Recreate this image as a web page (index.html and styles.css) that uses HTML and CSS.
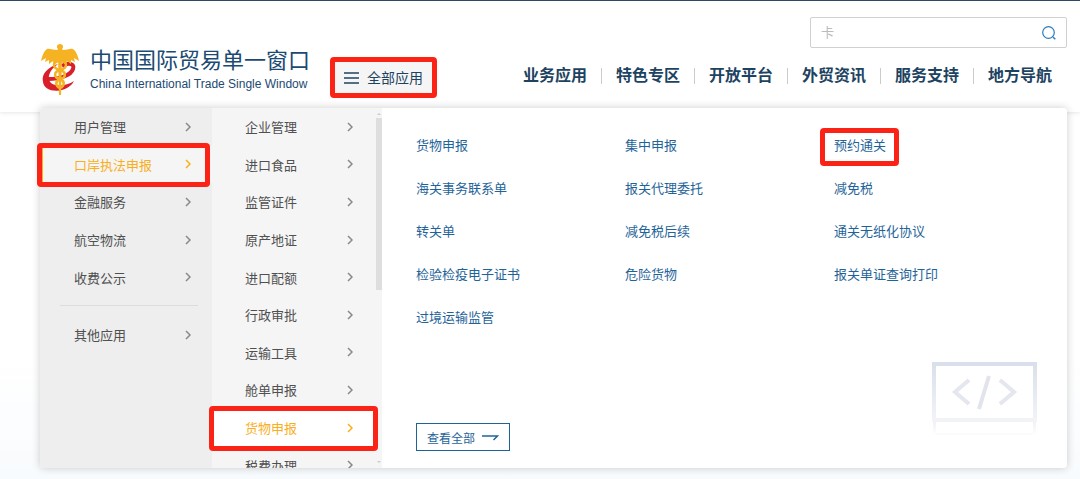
FILE: index.html
```html
<!DOCTYPE html>
<html lang="zh-CN">
<head>
  <meta charset="UTF-8">
  <title>中国国际贸易单一窗口</title>
  <link rel="stylesheet" href="styles.css">
</head>
<body>
  <svg class="defs" width="0" height="0">
    <symbol id="chevron" viewBox="0 0 6 10">
      <path d="M1 1l4 4-4 4" fill="none" stroke="currentColor" stroke-width="1.5"/>
    </symbol>
  </svg>

  <header class="header">
    <a class="brand" href="#">
      <svg class="emblem" viewBox="0 0 40 54">
        <path d="M22 23C29 19 35 21 33 26C31 32 21 36 8 36" fill="none" stroke="#d9202a" stroke-width="4"/>
        <path d="M18 21C8 24 1 31 3 39C4 47 15 50 25 46C29 44 32 42 34 38C27 43 15 44 11 40C7 36 8 28 18 21Z" fill="#d9202a"/>
        <path d="M20 1c3 0 4 3 2 5l1 1c4 0 7-2 10-1 3 2 5 7 6 12l-5-3 1 4-4-2v4l-4-3-1 4-4-3h-4l-4 3-1-4-4 3v-4l-4 2 1-4-5 3c1-5 3-10 6-12 3-1 6 1 10 1l1-1c-2-2-1-5 2-5z" fill="#f5b324"/>
        <path d="M18 14h4l-1 38h-2z" fill="#f5b324"/>
        <path d="M20 18C12 17 12 25 20 27C27 29 26 35 20 36C15 38 15 43 20 45M20 18C28 18 28 25 20 27C13 29 14 35 20 36C25 38 25 43 20 45" fill="none" stroke="#f5b324" stroke-width="2.500"/>
      </svg>
      <span class="brand-text">
        <span class="brand-cn">中国国际贸易单一窗口</span>
        <span class="brand-en">China International Trade Single Window</span>
      </span>
    </a>

    <button class="all-apps" type="button">
      <svg width="15" height="12" viewBox="0 0 15 12">
        <path d="M0 1h15M0 6h15M0 11h15" stroke="#1d4361" stroke-width="1.5"/>
      </svg>
      全部应用
    </button>

    <div class="header-right">
      <form class="search">
        <input type="text" placeholder="卡" aria-label="搜索">
        <button type="submit" aria-label="搜索">
          <svg width="14" height="14" viewBox="0 0 14 14">
            <circle cx="6.5" cy="6.5" r="5.8" fill="none" stroke="#2f7dbb" stroke-width="1.2"/>
            <path d="M11 11l2.300 2.300" stroke="#2f7dbb" stroke-width="1.400"/>
          </svg>
        </button>
      </form>
      <nav class="nav">
        <a href="#">业务应用</a>
        <a href="#">特色专区</a>
        <a href="#">开放平台</a>
        <a href="#">外贸资讯</a>
        <a href="#">服务支持</a>
        <a href="#">地方导航</a>
      </nav>
    </div>
  </header>

  <main class="mega">
    <nav class="level level-one">
      <div class="rows rows-five">
        <a href="#">用户管理<svg><use href="#chevron"/></svg></a>
        <a class="active marked" href="#">口岸执法申报<svg><use href="#chevron"/></svg></a>
        <a href="#">金融服务<svg><use href="#chevron"/></svg></a>
        <a href="#">航空物流<svg><use href="#chevron"/></svg></a>
        <a href="#">收费公示<svg><use href="#chevron"/></svg></a>
      </div>
      <hr>
      <div class="rows">
        <a href="#">其他应用<svg><use href="#chevron"/></svg></a>
      </div>
    </nav>

    <nav class="level level-two">
      <div class="rows rows-ten">
        <a href="#">企业管理<svg><use href="#chevron"/></svg></a>
        <a href="#">进口食品<svg><use href="#chevron"/></svg></a>
        <a href="#">监管证件<svg><use href="#chevron"/></svg></a>
        <a href="#">原产地证<svg><use href="#chevron"/></svg></a>
        <a href="#">进口配额<svg><use href="#chevron"/></svg></a>
        <a href="#">行政审批<svg><use href="#chevron"/></svg></a>
        <a href="#">运输工具<svg><use href="#chevron"/></svg></a>
        <a href="#">舱单申报<svg><use href="#chevron"/></svg></a>
        <a class="active marked" href="#">货物申报<svg><use href="#chevron"/></svg></a>
        <a href="#">税费办理<svg><use href="#chevron"/></svg></a>
      </div>
      <div class="scrollbar">
        <span class="arrow-up"></span>
        <span class="thumb"></span>
        <span class="arrow-down"></span>
      </div>
    </nav>

    <section class="apps">
      <div class="app-grid">
        <a href="#">货物申报</a>
        <a href="#">集中申报</a>
        <a class="marked" href="#">预约通关</a>
        <a href="#">海关事务联系单</a>
        <a href="#">报关代理委托</a>
        <a href="#">减免税</a>
        <a href="#">转关单</a>
        <a href="#">减免税后续</a>
        <a href="#">通关无纸化协议</a>
        <a href="#">检验检疫电子证书</a>
        <a href="#">危险货物</a>
        <a href="#">报关单证查询打印</a>
        <a href="#">过境运输监管</a>
      </div>
      <div class="apps-footer">
        <a class="view-all" href="#">
          查看全部
          <svg width="17" height="8" viewBox="0 0 17 8">
            <path d="M0 3h15.500L11.500 7" fill="none" stroke="#1f6499" stroke-width="1.500"/>
          </svg>
        </a>
        <svg class="code-art" width="106" height="90" viewBox="0 0 106 90">
          <defs>
            <linearGradient id="frame" x1="0" y1="0" x2="0" y2="1">
              <stop offset="0" stop-color="#d9dfec"/>
              <stop offset="1" stop-color="#f1f3f7"/>
            </linearGradient>
            <linearGradient id="fade" x1="0" y1="0" x2="0" y2="1">
              <stop offset="0" stop-color="#eef0f5"/>
              <stop offset="1" stop-color="#ffffff"/>
            </linearGradient>
          </defs>
          <rect x="1" y="60" width="3" height="14" fill="url(#fade)"/>
          <rect x="101" y="60" width="3" height="14" fill="url(#fade)"/>
          <rect x="4" y="72" width="97" height="2" fill="#fafbfc"/>
          <rect x="2" y="3" width="101" height="56" fill="none" stroke="url(#frame)" stroke-width="4"/>
          <path d="M37 19L23 31l14 12M68 19l14 12-14 12" fill="none" stroke="#e5e7ee" stroke-width="4"/>
          <path d="M57 15L47 48" stroke="#e1e4ed" stroke-width="4"/>
        </svg>
      </div>
    </section>
  </main>
</body>
</html>
```
FILE: styles.css
```css
* {
  box-sizing: border-box;
}

body {
  margin: 0;
  min-height: 100vh;
  border-top: 1px solid #2c4a68;
  font-family: "Liberation Sans", "Noto Sans CJK SC", sans-serif;
  font-size: 13px;
  color: #505050;
  background: linear-gradient(#fff 75%, #f8fbfd);
}

a {
  color: inherit;
  text-decoration: none;
}

button {
  font-family: inherit;
  cursor: pointer;
}

.defs {
  display: block;
}

/* header */
.header {
  display: flex;
  align-items: flex-start;
  padding: 16px 13px 14px 40px;
  background: #fff;
  box-shadow: 0 1px 4px rgba(0, 0, 0, 0.1);
}

.brand {
  display: flex;
  align-items: center;
  gap: 10px;
  margin-top: 26px;
  color: #1b4a73;
  white-space: nowrap;
}

.emblem {
  width: 40px;
  height: 54px;
}

.brand-text {
  display: flex;
  flex-direction: column;
}

.brand-cn {
  font-size: 22px;
  line-height: 28px;
}

.brand-en {
  font-size: 12px;
  line-height: 18px;
}

.all-apps {
  display: flex;
  align-items: center;
  gap: 8px;
  height: 41px;
  margin: 40px 0 0 20px;
  padding: 0 9px;
  border: 5px solid #fb2216;
  border-radius: 4px;
  background: #f5f5f5;
  font-size: 14px;
  line-height: 20px;
  color: #1d4361;
  white-space: nowrap;
}

.header-right {
  display: flex;
  flex-direction: column;
  align-items: flex-end;
  gap: 20px;
  margin-left: auto;
}

.search {
  display: flex;
  align-items: center;
  width: 257px;
  height: 31px;
  padding: 0 10px;
  border: 1px solid #d0d0d0;
  border-radius: 2px;
}

.search input {
  flex: 1;
  min-width: 0;
  padding: 0;
  border: 0;
  outline: 0;
  background: none;
  font-family: inherit;
  font-size: 13px;
}

.search input::placeholder {
  color: #bbb;
}

.search button {
  display: flex;
  padding: 0;
  border: 0;
  background: none;
}

.nav {
  display: flex;
  margin-right: 1px;
}

.nav a {
  padding: 0 14px;
  font-size: 16px;
  line-height: 16px;
  font-weight: bold;
  color: #1d4361;
  white-space: nowrap;
}

.nav a + a {
  border-left: 1px solid #ccc;
}

/* drop-down panel */
.mega {
  position: relative;
  display: flex;
  margin: -4px 13px 10px 40px;
  border-radius: 3px;
  background: #fff;
  box-shadow: 0 0 8px rgba(0, 0, 0, 0.2);
}

.level {
  position: relative;
  flex: none;
}

.rows {
  display: grid;
  grid-auto-rows: 1fr;
}

.rows-five {
  height: 188px;
}

.rows-ten {
  flex: 1;
  height: 376px;
}

.rows a {
  position: relative;
  display: flex;
  align-items: center;
  justify-content: space-between;
}

.rows svg {
  width: 6px;
  height: 10px;
  color: #888;
}

.rows .active,
.rows .active svg {
  color: #f9ae1c;
}

.level-one {
  width: 172px;
  border-radius: 3px 0 0 3px;
  background: #eee;
}

.level-one a {
  min-height: 37px;
  padding: 0 21px 0 34px;
}

.level-one .active {
  background: #f5f5f5;
  box-shadow: inset 3px 0 #f9ae1c;
}

.level-one hr {
  margin: 9px 14px 10px 20px;
  border: 0;
  border-top: 1px solid #ddd;
}

.level-two {
  display: flex;
  width: 170px;
  max-height: 360px;
  overflow-y: clip;
  background: #f5f5f5;
}

.level-two a {
  padding: 0 22px 0 33px;
}

.level-two .active {
  background: #fff;
}

.scrollbar {
  display: flex;
  flex-direction: column;
  align-items: center;
  width: 7px;
  height: 360px;
  padding: 5px 0;
}

.thumb {
  width: 6px;
  height: 172px;
  margin: 3px 0 auto;
  background: #dedede;
}

.arrow-up,
.arrow-down {
  border: 2px solid transparent;
}

.arrow-up {
  border-top: 0;
  border-bottom-color: #ccc;
}

.arrow-down {
  border-bottom: 0;
  border-top-color: #ccc;
}

/* red frame drawn over the marked entries */
.marked {
  position: relative;
}

.marked::after {
  content: "";
  position: absolute;
  border: 5px solid #fb2216;
  border-radius: 4px;
}

.level-one .marked::after {
  inset: -3px 2px -4px -3px;
}

.level-two .marked::after {
  inset: -3px -3px -5px -3px;
}

.app-grid .marked::after {
  inset: -8px -13px -11px -14px;
}

/* application links */
.apps {
  flex: 1;
  display: flex;
  flex-direction: column;
  justify-content: space-between;
  padding: 28px 24px 17px 34px;
  color: #1f6499;
}

.app-grid {
  display: grid;
  grid-template-columns: repeat(3, 1fr);
  gap: 24px 0;
  justify-items: start;
}

.app-grid a {
  line-height: 19px;
}

.apps-footer {
  display: flex;
  align-items: flex-end;
  justify-content: space-between;
}

.view-all {
  display: flex;
  align-items: center;
  gap: 7px;
  height: 28px;
  padding: 0 10px;
  border: 1px solid #1f6499;
  font-size: 12px;
}

.code-art {
  margin-right: 5px;
}
```
